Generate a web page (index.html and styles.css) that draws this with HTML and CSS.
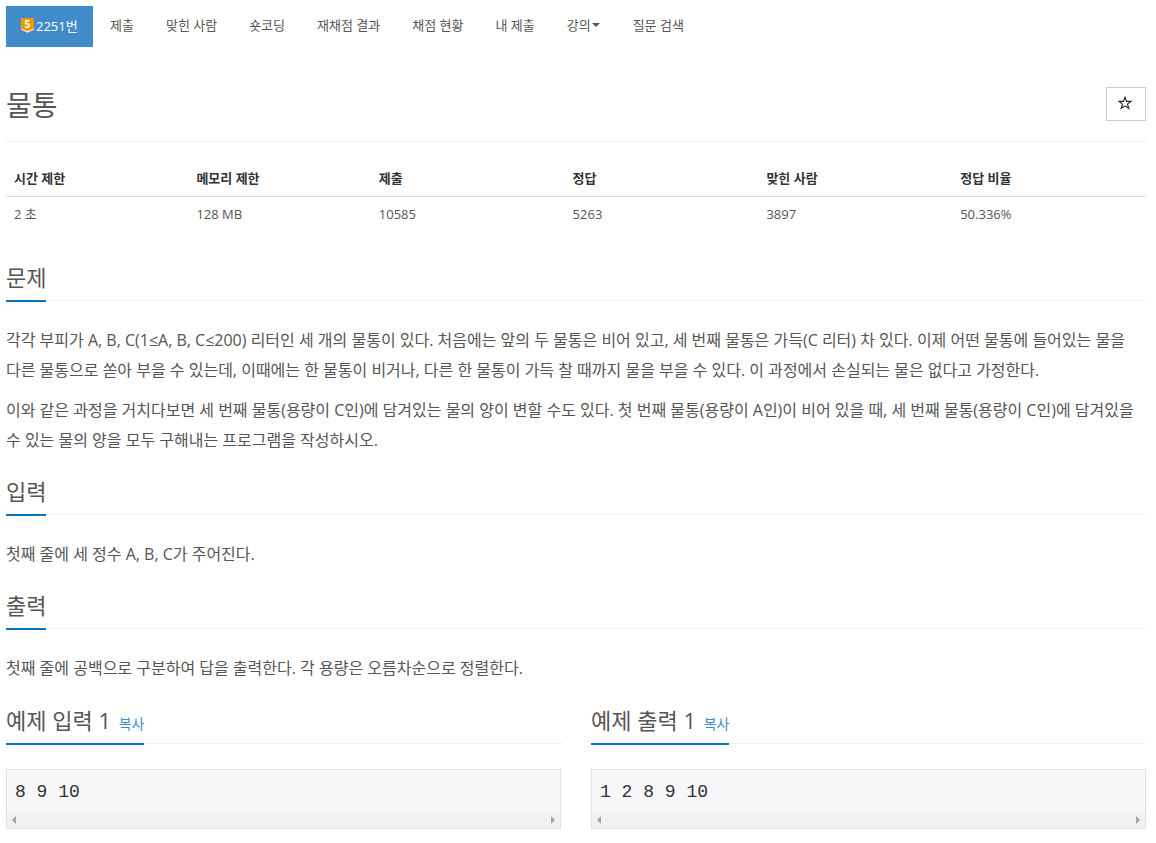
FILE: index.html
```html
<!DOCTYPE html>
<html lang="ko">
  <head>
    <meta charset="UTF-8" />
    <title>2251번: 물통</title>
    <link rel="stylesheet" href="styles.css">
  </head>
  <body>
    <ul class="nav">
      <li class="active">
        <a href="#">
          <svg class="tier" viewBox="0 0 14 16" width="13" height="15">
            <path d="M0 0H14V12L7 15.5L0 12Z" fill="#ec9a00" />
            <path d="M0 11.5L7 14L14 11.5V12.5L7 15.8L0 12.5Z" fill="#fff" opacity="0.75" />
            <text x="7" y="10.5" text-anchor="middle" class="tier-num">5</text>
          </svg>2251번</a>
      </li>
      <li><a href="#">제출</a></li>
      <li><a href="#">맞힌 사람</a></li>
      <li><a href="#">숏코딩</a></li>
      <li><a href="#">재채점 결과</a></li>
      <li><a href="#">채점 현황</a></li>
      <li><a href="#">내 제출</a></li>
      <li><a href="#">강의<span class="caret"></span></a></li>
      <li class="search"><a href="#">질문 검색</a></li>
    </ul>

    <div class="page-header">
      <h1>물통</h1>
      <button class="star">
        <svg viewBox="0 0 14 14" width="14" height="14">
          <path d="M7 1.2L8.6 5.4H13L9.5 8.1L10.8 12.5L7 9.9L3.2 12.5L4.5 8.1L1 5.4H5.4Z" fill="none" stroke="#222" stroke-width="1.1" />
        </svg>
      </button>
    </div>

    <table class="info">
      <thead>
        <tr>
          <th class="w16">시간 제한</th>
          <th class="w16">메모리 제한</th>
          <th>제출</th>
          <th>정답</th>
          <th>맞힌 사람</th>
          <th>정답 비율</th>
        </tr>
      </thead>
      <tbody>
        <tr>
          <td>2 초</td>
          <td>128 MB</td>
          <td>10585</td>
          <td>5263</td>
          <td>3897</td>
          <td>50.336%</td>
        </tr>
      </tbody>
    </table>

    <section class="problem-first">
      <div class="headline"><h2>문제</h2></div>
      <div class="text">
        <p>각각 부피가 A, B, C(1≤A, B, C≤200) 리터인 세 개의 물통이 있다. 처음에는 앞의 두 물통은 비어 있고, 세 번째 물통은 가득(C 리터) 차 있다. 이제 어떤 물통에 들어있는 물을 다른 물통으로 쏟아 부을 수 있는데, 이때에는 한 물통이 비거나, 다른 한 물통이 가득 찰 때까지 물을 부을 수 있다. 이 과정에서 손실되는 물은 없다고 가정한다.</p>
        <p>이와 같은 과정을 거치다보면 세 번째 물통(용량이 C인)에 담겨있는 물의 양이 변할 수도 있다. 첫 번째 물통(용량이 A인)이 비어 있을 때, 세 번째 물통(용량이 C인)에 담겨있을 수 있는 물의 양을 모두 구해내는 프로그램을 작성하시오.</p>
      </div>
    </section>

    <section>
      <div class="headline"><h2>입력</h2></div>
      <div class="text"><p>첫째 줄에 세 정수 A, B, C가 주어진다.</p></div>
    </section>

    <section>
      <div class="headline"><h2>출력</h2></div>
      <div class="text"><p>첫째 줄에 공백으로 구분하여 답을 출력한다. 각 용량은 오름차순으로 정렬한다.</p></div>
    </section>

    <div class="samples">
      <div class="sample">
        <div class="headline"><h2>예제 입력 1 <a class="copy" href="#">복사</a></h2></div>
        <div class="code-box">
          <pre>8 9 10</pre>
          <div class="scrollbar"><span class="arrow left"></span><span class="arrow right"></span></div>
        </div>
      </div>
      <div class="sample">
        <div class="headline"><h2>예제 출력 1 <a class="copy" href="#">복사</a></h2></div>
        <div class="code-box">
          <pre>1 2 8 9 10</pre>
          <div class="scrollbar"><span class="arrow left"></span><span class="arrow right"></span></div>
        </div>
      </div>
    </div>
  </body>
</html>
```

FILE: styles.css
```css
* {
  box-sizing: border-box;
}
html,
body {
  overflow: hidden;
  height: 843px;
}
body {
  margin: 0;
  padding: 6px 10px 0 6px;
  font-family: "Open Sans", "Noto Sans CJK KR", sans-serif;
  font-size: 14px;
  color: #555;
  background: #fff;
}
a {
  color: inherit;
  text-decoration: none;
}

/* nav */
.nav {
  display: flex;
  list-style: none;
  margin: 0;
  padding: 0;
  height: 41px;
}
.nav li.active {
  margin-right: 1px;
}
.nav li.search {
  margin-left: 1px;
}
.nav a {
  display: flex;
  align-items: center;
  height: 41px;
  padding: 0 16px 4px;
  font-size: 13px;
  color: #555;
}
.nav li.active a {
  width: 87px;
  padding: 0 0 2px 15px;
  background: #428bca;
  color: #fff;
}
.tier {
  margin-right: 2px;
}
.tier-num {
  font-size: 11px;
  font-weight: 700;
  fill: #fff;
  font-family: "Open Sans", sans-serif;
}
.caret {
  width: 0;
  height: 0;
  margin-left: 1px;
  border-top: 4px solid #555;
  border-left: 4px solid transparent;
  border-right: 4px solid transparent;
}

/* title */
.page-header {
  display: flex;
  justify-content: space-between;
  align-items: flex-start;
  height: 95px;
  border-bottom: 1px solid #eee;
  padding-top: 40px;
}
h1 {
  margin: 0;
  font-size: 28px;
  font-weight: 400;
  line-height: 36px;
}
.star {
  display: flex;
  align-items: center;
  justify-content: center;
  width: 40px;
  height: 34px;
  border: 1px solid #ccc;
  background: #fff;
  padding: 0 2px 2px 0;
}

/* info table */
.info {
  width: 100%;
  margin-top: 18px;
  border-collapse: collapse;
  table-layout: fixed;
  font-size: 13px;
  color: #333;
}
.info th {
  width: 17%;
  height: 36px;
  padding: 0 8px;
  text-align: left;
  font-weight: 700;
  border-bottom: 1px solid #ddd;
}
.info th.w16 {
  width: 16%;
}
.info td {
  height: 35px;
  padding: 0 8px;
  color: #555;
}

/* sections */
section {
  margin-top: 20px;
}
.problem-first {
  margin-top: 30px;
}
.headline {
  display: flex;
  align-items: flex-start;
  height: 40px;
  border-bottom: 1px dotted #e5e5e5;
  margin-bottom: 24px;
}
.headline h2 {
  height: 41px;
  margin: 0;
  font-size: 22px;
  font-weight: 400;
  line-height: 32px;
  color: #555;
  border-bottom: 2px solid #0076c0;
}
.text p {
  margin: 0 0 10px;
  font-size: 16px;
  line-height: 30px;
  color: #555;
  word-break: keep-all;
}

/* samples */
.samples {
  display: flex;
  gap: 30px;
  margin-top: 21px;
}
.sample {
  flex: 1;
}
.sample .headline {
  margin-bottom: 25px;
}
.copy {
  font-size: 14px;
  color: #428bca;
  margin-left: 2px;
}
.code-box {
  border: 1px solid #e1e1e8;
  background: #f7f7f9;
}
.code-box pre {
  margin: 0;
  height: 41px;
  padding: 0 8px;
  font-family: "Liberation Mono", monospace;
  font-size: 18px;
  line-height: 44px;
  color: #333;
}
.scrollbar {
  display: flex;
  justify-content: space-between;
  align-items: center;
  height: 17px;
  padding: 0 5px;
  background: #f1f1f1;
}
.arrow {
  width: 0;
  height: 0;
  border-top: 4px solid transparent;
  border-bottom: 4px solid transparent;
}
.arrow.left {
  border-right: 4px solid #a3a3a3;
}
.arrow.right {
  border-left: 4px solid #a3a3a3;
}
```
